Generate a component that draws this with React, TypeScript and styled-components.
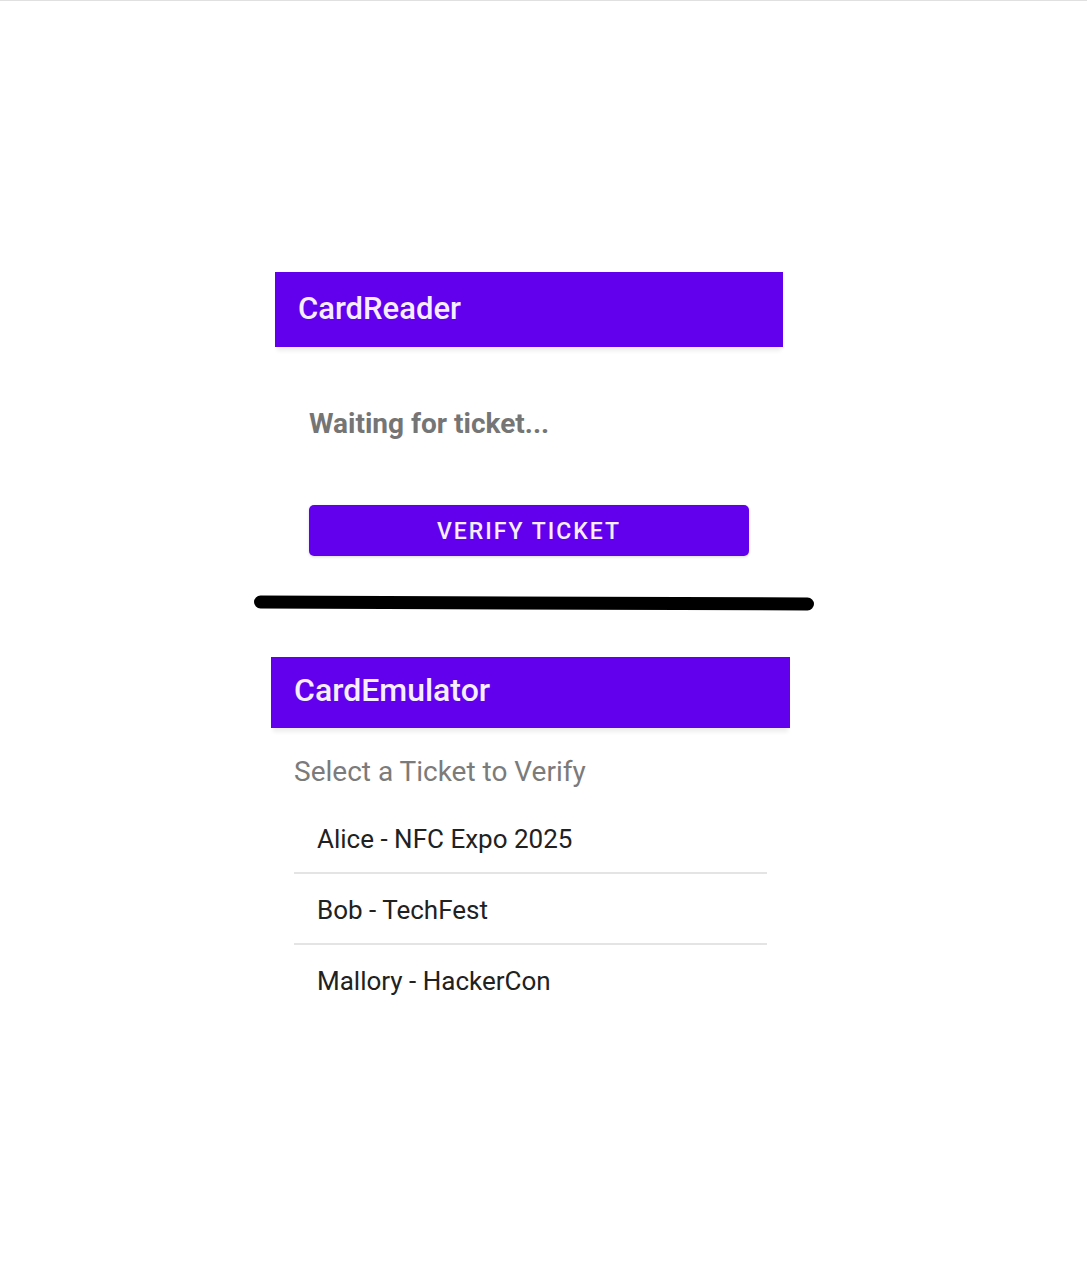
import React from "react";
import styled, { createGlobalStyle } from "styled-components";

const GlobalStyle = createGlobalStyle`
  *, *::before, *::after { box-sizing: border-box; }
  body { margin: 0; background: #fff; font-family: Roboto, "Noto Sans", sans-serif; }
`;

const Page = styled.main`
  display: flex;
  flex-direction: column;
  align-items: center;
  padding: 271px 32px 240px;
  border-top: 1px solid #e0e0e0;
`;

const Screen = styled.section<{ $width: number; $shift: number }>`
  width: 100%;
  max-width: ${(p) => p.$width}px;
  margin-right: ${(p) => p.$shift}px;
`;

const AppBar = styled.header<{ $compact?: boolean }>`
  display: flex;
  align-items: center;
  height: ${(p) => (p.$compact ? 71 : 75)}px;
  padding: 0 23px ${(p) => (p.$compact ? 6 : 2)}px;
  background: #6200ee;
  box-shadow: 0 6px 4px -2px rgba(0, 0, 0, 0.07);
`;

const Title = styled.h1<{ $size: number }>`
  margin: 0;
  color: #f6eeff;
  font-size: ${(p) => p.$size}px;
  line-height: 40px;
  font-weight: 500;
`;

const ReaderBody = styled.div`
  display: flex;
  flex-direction: column;
  gap: 61px;
  padding: 57px 34px 39px;
`;

const Status = styled.p`
  margin: 0;
  color: #757575;
  font-size: 28px;
  line-height: 40px;
  font-weight: 700;
`;

const VerifyButton = styled.button`
  height: 51px;
  padding: 3px 0 0;
  border: 0;
  border-radius: 5px;
  background: #6200ee;
  box-shadow: 0 1px 3px rgba(0, 0, 0, 0.15);
  color: #f6eeff;
  font: 500 23px/32px Roboto, sans-serif;
  letter-spacing: 2px;
  text-transform: uppercase;
  cursor: pointer;
`;

const Divider = styled.svg`
  display: block;
  width: 100%;
  max-width: 560px;
  height: 16px;
  margin: 0 19px 46px 0;
`;

const EmulatorBody = styled.div`
  padding: 24px 23px;
`;

const Prompt = styled.h2`
  margin: 0 0 11px;
  color: #7b7b7b;
  font-size: 28px;
  line-height: 40px;
  font-weight: 400;
`;

const TicketList = styled.ul`
  margin: 0;
  padding: 0;
  list-style: none;
`;

const TicketRow = styled.li`
  & + & { border-top: 2px solid #e4e4e4; }
`;

const TicketButton = styled.button`
  display: block;
  width: 100%;
  height: 69px;
  padding: 2px 23px 0;
  border: 0;
  background: transparent;
  color: #212121;
  font: 400 26px/40px Roboto, sans-serif;
  text-align: left;
  cursor: pointer;
`;

const tickets = ["Alice - NFC Expo 2025", "Bob - TechFest", "Mallory - HackerCon"];

export default function App() {
  return (
    <>
      <GlobalStyle />
      <Page>
        <Screen $width={508} $shift={29}>
          <AppBar><Title $size={31}>CardReader</Title></AppBar>
          <ReaderBody>
            <Status>Waiting for ticket...</Status>
            <VerifyButton type="button">Verify Ticket</VerifyButton>
          </ReaderBody>
        </Screen>
        <Divider viewBox="0 0 560 16" preserveAspectRatio="none" aria-hidden="true">
          <path d="M6.5 7L553.5 9" fill="none" stroke="#000" strokeWidth="13" strokeLinecap="round" />
        </Divider>
        <Screen $width={519} $shift={26}>
          <AppBar $compact><Title $size={32}>CardEmulator</Title></AppBar>
          <EmulatorBody>
            <Prompt>Select a Ticket to Verify</Prompt>
            <TicketList>
              {tickets.map((ticket) => (
                <TicketRow key={ticket}><TicketButton type="button">{ticket}</TicketButton></TicketRow>
              ))}
            </TicketList>
          </EmulatorBody>
        </Screen>
      </Page>
    </>
  );
}
